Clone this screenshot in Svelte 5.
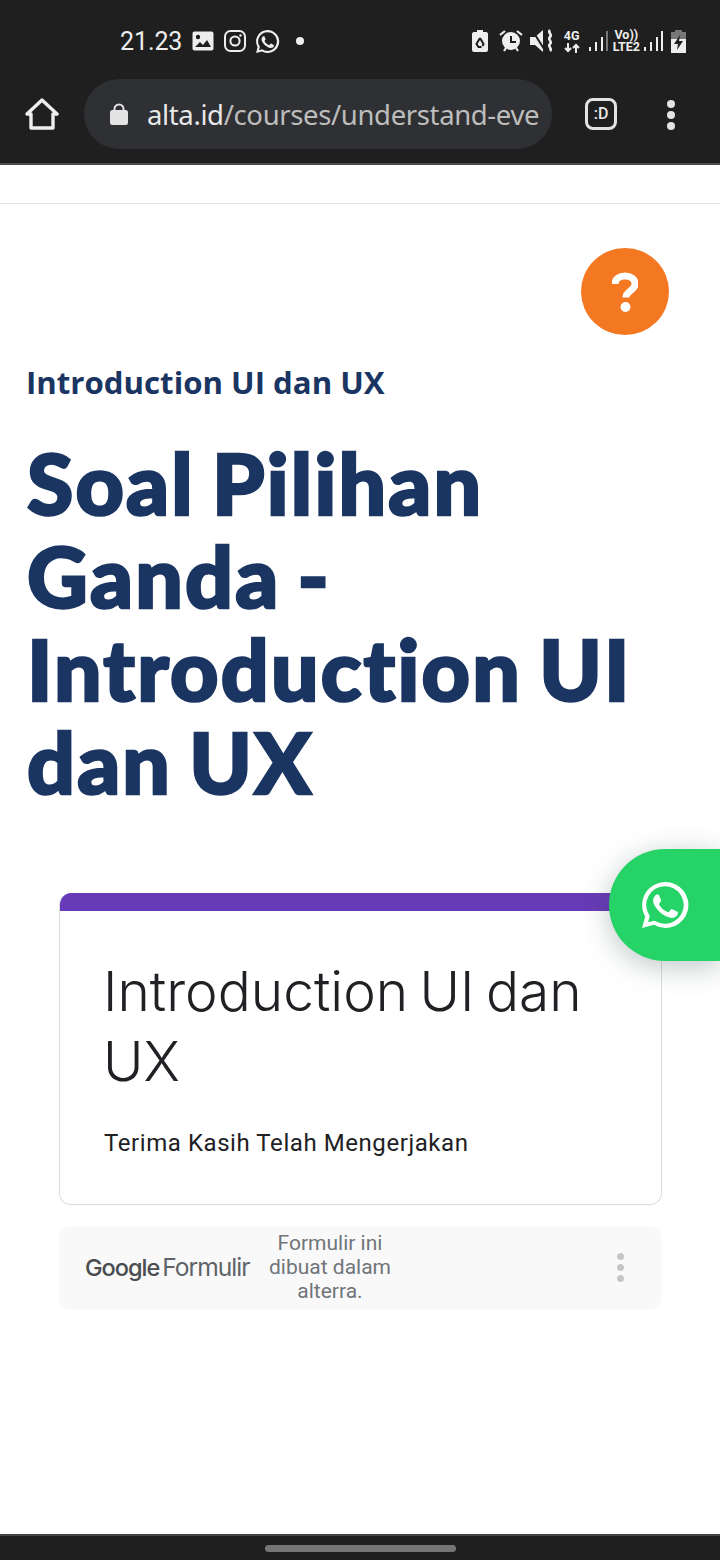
<script>
  let title = "Soal Pilihan Ganda - Introduction UI dan UX";
  let course = "Introduction UI dan UX";
</script>

<style>
  :global(body) {
    margin: 0;
    background: #fff;
  }

  .page {
    position: relative;
    width: 720px;
    height: 1560px;
    display: flex;
    flex-direction: column;
    overflow: hidden;
    font-family: "Noto Sans", sans-serif;
  }

  .status {
    height: 70px;
    flex: none;
    background: #1f1f1f;
    color: #eee;
    display: flex;
    align-items: center;
    padding: 12px 34px 0 120px;
    box-sizing: border-box;
    justify-content: space-between;
  }

  .status-left,
  .status-right {
    display: flex;
    align-items: center;
  }

  .clock {
    font-family: Roboto, sans-serif;
    font-size: 25px;
    width: 72px;
    letter-spacing: -0.1px;
  }

  .status svg {
    display: block;
    flex: none;
  }

  .net {
    font-family: Roboto, sans-serif;
    font-weight: 700;
    font-size: 12.5px;
    line-height: 12px;
    text-align: center;
  }

  .status .arrows {
    margin: 1px auto 0;
  }

  .toolbar {
    height: 95px;
    flex: none;
    box-sizing: border-box;
    background: #1f1f1f;
    border-bottom: 2px solid #4a4a4a;
    display: flex;
    align-items: flex-start;
    padding-top: 9px;
  }

  .home {
    width: 84px;
    height: 70px;
    display: flex;
    align-items: center;
    justify-content: center;
    flex: none;
  }

  .url {
    width: 468px;
    height: 70px;
    flex: none;
    box-sizing: border-box;
    background: #2f3033;
    border-radius: 35px;
    display: flex;
    align-items: center;
    padding-left: 25px;
    overflow: hidden;
    font-size: 27.5px;
    letter-spacing: -0.37px;
    white-space: nowrap;
    color: #bdbdbd;
  }

  .url svg {
    margin-right: 18px;
    flex: none;
  }

  .url b {
    font-weight: 400;
    color: #e8e8e8;
  }

  .tab {
    margin-left: 33px;
    width: 32px;
    height: 32px;
    margin-top: 19px;
    box-sizing: border-box;
    border: 3px solid #e3e3e3;
    border-radius: 8px;
    color: #e8e8e8;
    font-family: Roboto, sans-serif;
    font-weight: 500;
    font-size: 16px;
    line-height: 26px;
    text-align: center;
    flex: none;
  }

  .dots {
    margin-left: 50px;
    margin-top: 21px;
    display: flex;
    flex-direction: column;
    gap: 3px;
    flex: none;
  }

  .dots i {
    width: 8px;
    height: 8px;
    border-radius: 50%;
    background: #e3e3e3;
  }

  .content {
    flex: 1;
    min-height: 0;
    display: flex;
    flex-direction: column;
  }

  .topbar {
    height: 38px;
    flex: none;
    border-bottom: 1px solid #e2e2e2;
  }

  .help-row {
    display: flex;
    justify-content: flex-end;
    padding: 44px 51px 0 0;
  }

  .help {
    width: 88px;
    height: 87px;
    border-radius: 50%;
    background: #f47721;
    color: #fff;
    display: flex;
    align-items: center;
    justify-content: center;
  }

  .course {
    margin: 25px 0 0 26px;
    font-family: "Open Sans", sans-serif;
    font-weight: 700;
    font-size: 31.2px;
    line-height: 44px;
    color: #1a3562;
  }

  h1 {
    margin: 32px 0 0 27px;
    width: 640px;
    font-family: Lato, sans-serif;
    font-weight: 900;
    font-size: 84px;
    line-height: 93px;
    letter-spacing: 2.2px;
    word-spacing: -5px;
    -webkit-text-stroke: 2.5px #1a3562;
    color: #1a3562;
  }

  .form {
    margin: 85px 58px 0 59px;
  }

  .card {
    box-sizing: border-box;
    height: 312px;
    border: 1px solid #dadce0;
    border-top: 0;
    border-radius: 12px;
    position: relative;
    overflow: hidden;
    padding: 64px 44px 0;
  }

  .card::before {
    content: "";
    position: absolute;
    left: -1px;
    right: -1px;
    top: 0;
    height: 18px;
    background: #673ab7;
  }

  .card h2 {
    margin: -1px 0 1px -1px;
    font-family: Inter, Roboto, sans-serif;
    font-weight: 300;
    font-size: 55px;
    line-height: 70px;
    word-spacing: -4px;
    color: #202124;
  }

  .card p {
    margin: 30px 0 0;
    font-family: Roboto, sans-serif;
    font-size: 24px;
    line-height: 34px;
    letter-spacing: 0.57px;
    color: #202124;
  }

  .foot {
    margin-top: 21px;
    height: 84px;
    box-sizing: border-box;
    background: #f9f9f9;
    border-radius: 12px;
    display: flex;
    align-items: center;
    padding: 0 0 2px 26px;
  }

  .brand {
    font-family: Inter, Roboto, sans-serif;
    font-size: 24.6px;
    color: #5f6368;
    letter-spacing: -1px;
    white-space: nowrap;
    width: 175px;
    flex: none;
  }

  .brand b {
    font-weight: 500;
    font-size: 23.5px;
    color: #4a4d50;
    margin-right: 3px;
  }

  .note {
    width: 140px;
    flex: none;
    font-family: Roboto, sans-serif;
    font-size: 21px;
    line-height: 24px;
    text-align: center;
    color: #70757a;
  }

  .more {
    margin-left: 217px;
    display: flex;
    flex-direction: column;
    gap: 4px;
  }

  .more i {
    width: 7px;
    height: 7px;
    border-radius: 50%;
    background: #c4c6c8;
  }

  .nav {
    height: 26px;
    flex: none;
    box-sizing: border-box;
    background: #1f1f1f;
    border-top: 2px solid #444;
    display: flex;
    justify-content: center;
    padding-top: 9px;
  }

  .pill {
    width: 191px;
    height: 7px;
    border-radius: 4px;
    background: #757575;
  }

  .wa {
    position: absolute;
    left: 609px;
    top: 849px;
    width: 111px;
    height: 112px;
    border-radius: 56px 0 0 56px;
    background: #25d366;
    box-shadow: 0 6px 28px rgba(60, 80, 80, 0.32);
    display: flex;
    align-items: center;
    padding-left: 31px;
    box-sizing: border-box;
  }
</style>

<div class="page">
  <div class="status">
    <div class="status-left">
      <span class="clock">21.23</span>
      <svg width="22" height="20" viewBox="0 0 22 20" style="margin-right:10px">
        <rect x="0.5" y="0.5" width="21" height="19" rx="2" fill="#eee" />
        <circle cx="6" cy="6" r="2.2" fill="#1f1f1f" />
        <path d="M3 16l5-5 3 3 4-5 4 7z" fill="#1f1f1f" />
      </svg>
      <svg width="22" height="22" viewBox="0 0 22 22" fill="none" stroke="#eee" stroke-width="2" style="margin-right:9px">
        <rect x="1" y="1" width="20" height="20" rx="5.5" />
        <circle cx="11" cy="11" r="4.6" />
        <circle cx="16.5" cy="5.5" r="1.2" fill="#eee" stroke="none" />
      </svg>
      <svg width="25" height="25" viewBox="0 0 24 24" style="margin-right:15px">
        <path fill="#eee" d="M12 1a11 11 0 0 0-9.500 16.500L1 23l5.700-1.500A11 11 0 1 0 12 1zm0 2a9 9 0 1 1-4.700 16.700l-.4-.2-3 .8.800-3-.2-.4A9 9 0 0 1 12 3zM8.300 7c-.3 0-.7.100-1 .5-.4.500-1 1.100-1 2.500s1 2.800 1.200 3c.1.200 2 3.200 5 4.400 2.400 1 3 .8 3.500.7.500 0 1.700-.7 2-1.400.2-.7.200-1.200.1-1.400l-.6-.3-2-1c-.3-.1-.5-.1-.7.200l-.9 1.100c-.2.200-.3.200-.6.100-1-.4-1.900-.9-2.700-1.700-.6-.6-1.100-1.300-1.400-1.900-.1-.3 0-.4.100-.6l.5-.6.300-.5v-.5l-.9-2.200c-.2-.5-.5-.4-.7-.4z" />
      </svg>
      <svg width="10" height="10" viewBox="0 0 10 10"><circle cx="5" cy="5" r="4" fill="#eee" /></svg>
    </div>
    <div class="status-right">
      <svg width="16" height="22" viewBox="0 0 16 22" style="margin-right:11px">
        <path fill="#eee" d="M5 0h6v2h3a2 2 0 0 1 2 2v16a2 2 0 0 1-2 2H2a2 2 0 0 1-2-2V4a2 2 0 0 1 2-2h3z" />
        <path fill="none" stroke="#1f1f1f" stroke-width="2" d="M8 8l-3.500 6 2 3h3M8 8l3.500 6-1 2" />
      </svg>
      <svg width="24" height="24" viewBox="0 0 24 24" style="margin-right:7px">
        <path stroke="#eee" stroke-width="2.200" fill="none" d="M1 6l5-4M23 6l-5-4M5 22l2-3M19 22l-2-3" />
        <circle cx="12" cy="12" r="9" fill="#eee" />
        <path d="M12 7v6h5" stroke="#1f1f1f" stroke-width="2" fill="none" />
      </svg>
      <svg width="24" height="24" viewBox="0 0 24 24" style="margin-right:10px">
        <path fill="#eee" d="M0 8h5l8-7v22L5 16H0z" />
        <path stroke="#1f1f1f" stroke-width="2" d="M2 1l14 22" />
        <path stroke="#eee" stroke-width="2.600" fill="none" d="M20 1c-3 3 3 4 0 7s3 4 0 7 3 4 0 7" />
      </svg>
      <div class="net" style="margin-right:9px">
        4G
        <svg class="arrows" width="16" height="10" viewBox="0 0 16 10" fill="none" stroke="#eee" stroke-width="2">
          <path d="M4 0v8M1 5l3 3 3-3M12 10V2M9 5l3-3 3 3" />
        </svg>
      </div>
      <svg width="19" height="20" viewBox="0 0 19 20" style="margin-right:5px">
        <path fill="#eee" d="M0 16h2v4H0zM6 11h2v9H6zM12 6h2v14h-2z" /><path fill="#777" d="M17 0h2v20h-2z" />
      </svg>
      <div class="net" style="margin-right:4px">Vo))<br />LTE2</div>
      <svg width="19" height="20" viewBox="0 0 19 20" style="margin-right:8px">
        <path fill="#eee" d="M0 16h2v4H0zM6 11h2v9H6zM12 6h2v14h-2zM17 0h2v20h-2z" />
      </svg>
      <svg width="15" height="23" viewBox="0 0 15 23">
        <path fill="#777" d="M4 0h7v2h4v7H0V2h4z" />
        <path fill="#eee" d="M0 9h15v14H0z" />
        <path fill="#1f1f1f" d="M9 5L3 14h4l-1 6 6-9H8z" />
      </svg>
    </div>
  </div>

  <div class="toolbar">
    <div class="home">
      <svg width="34" height="34" viewBox="0 0 34 34" fill="none" stroke="#eee" stroke-width="3.400" stroke-linejoin="round">
        <path d="M2 17L17 3l15 14h-4v14H6V17z" />
      </svg>
    </div>
    <div class="url">
      <svg width="20" height="24" viewBox="0 0 20 24">
        <path fill="none" stroke="#e3e3e3" stroke-width="2" d="M5.500 9V7a4.500 4.500 0 0 1 9 0v2" />
        <rect x="1" y="8" width="18" height="15" rx="2.500" fill="#e3e3e3" />
      </svg>
      <span><b>alta.id</b>/courses/understand-eve</span>
    </div>
    <div class="tab">:D</div>
    <div class="dots"><i></i><i></i><i></i></div>
  </div>

  <div class="content">
    <div class="topbar"></div>
    <div class="help-row">
      <div class="help">
        <svg width="26" height="40" viewBox="0 0 26 40" fill="none">
          <path d="M3 12c0-5 4.500-8 10-8s10 3 10 8c0 7-9 6.500-9 13.500" stroke="#fff" stroke-width="7" />
          <circle cx="13.500" cy="35" r="5" fill="#fff" />
        </svg>
      </div>
    </div>
    <div class="course">{course}</div>
    <h1>{title}</h1>
    <div class="form">
      <div class="card">
        <h2>{course}</h2>
        <p>Terima Kasih Telah Mengerjakan</p>
      </div>
      <div class="foot">
        <div class="brand"><b>Google</b>Formulir</div>
        <div class="note">Formulir ini dibuat dalam alterra.</div>
        <div class="more"><i></i><i></i><i></i></div>
      </div>
    </div>
  </div>

  <div class="nav"><div class="pill"></div></div>

  <div class="wa">
    <svg width="50" height="50" viewBox="0 0 24 24">
      <path fill="#fff" d="M12 1a11 11 0 0 0-9.500 16.500L1 23l5.700-1.500A11 11 0 1 0 12 1zm0 2a9 9 0 1 1-4.700 16.700l-.4-.2-3 .8.800-3-.2-.4A9 9 0 0 1 12 3zM8.300 7c-.3 0-.7.100-1 .5-.4.500-1 1.100-1 2.500s1 2.800 1.200 3c.1.200 2 3.200 5 4.400 2.400 1 3 .8 3.500.7.500 0 1.700-.7 2-1.400.2-.7.200-1.200.1-1.400l-.6-.3-2-1c-.3-.1-.5-.1-.7.200l-.9 1.100c-.2.200-.3.200-.6.100-1-.4-1.900-.9-2.700-1.700-.6-.6-1.100-1.300-1.400-1.900-.1-.3 0-.4.100-.6l.5-.6.300-.5v-.5l-.9-2.200c-.2-.5-.5-.4-.7-.4z" />
    </svg>
  </div>
</div>
